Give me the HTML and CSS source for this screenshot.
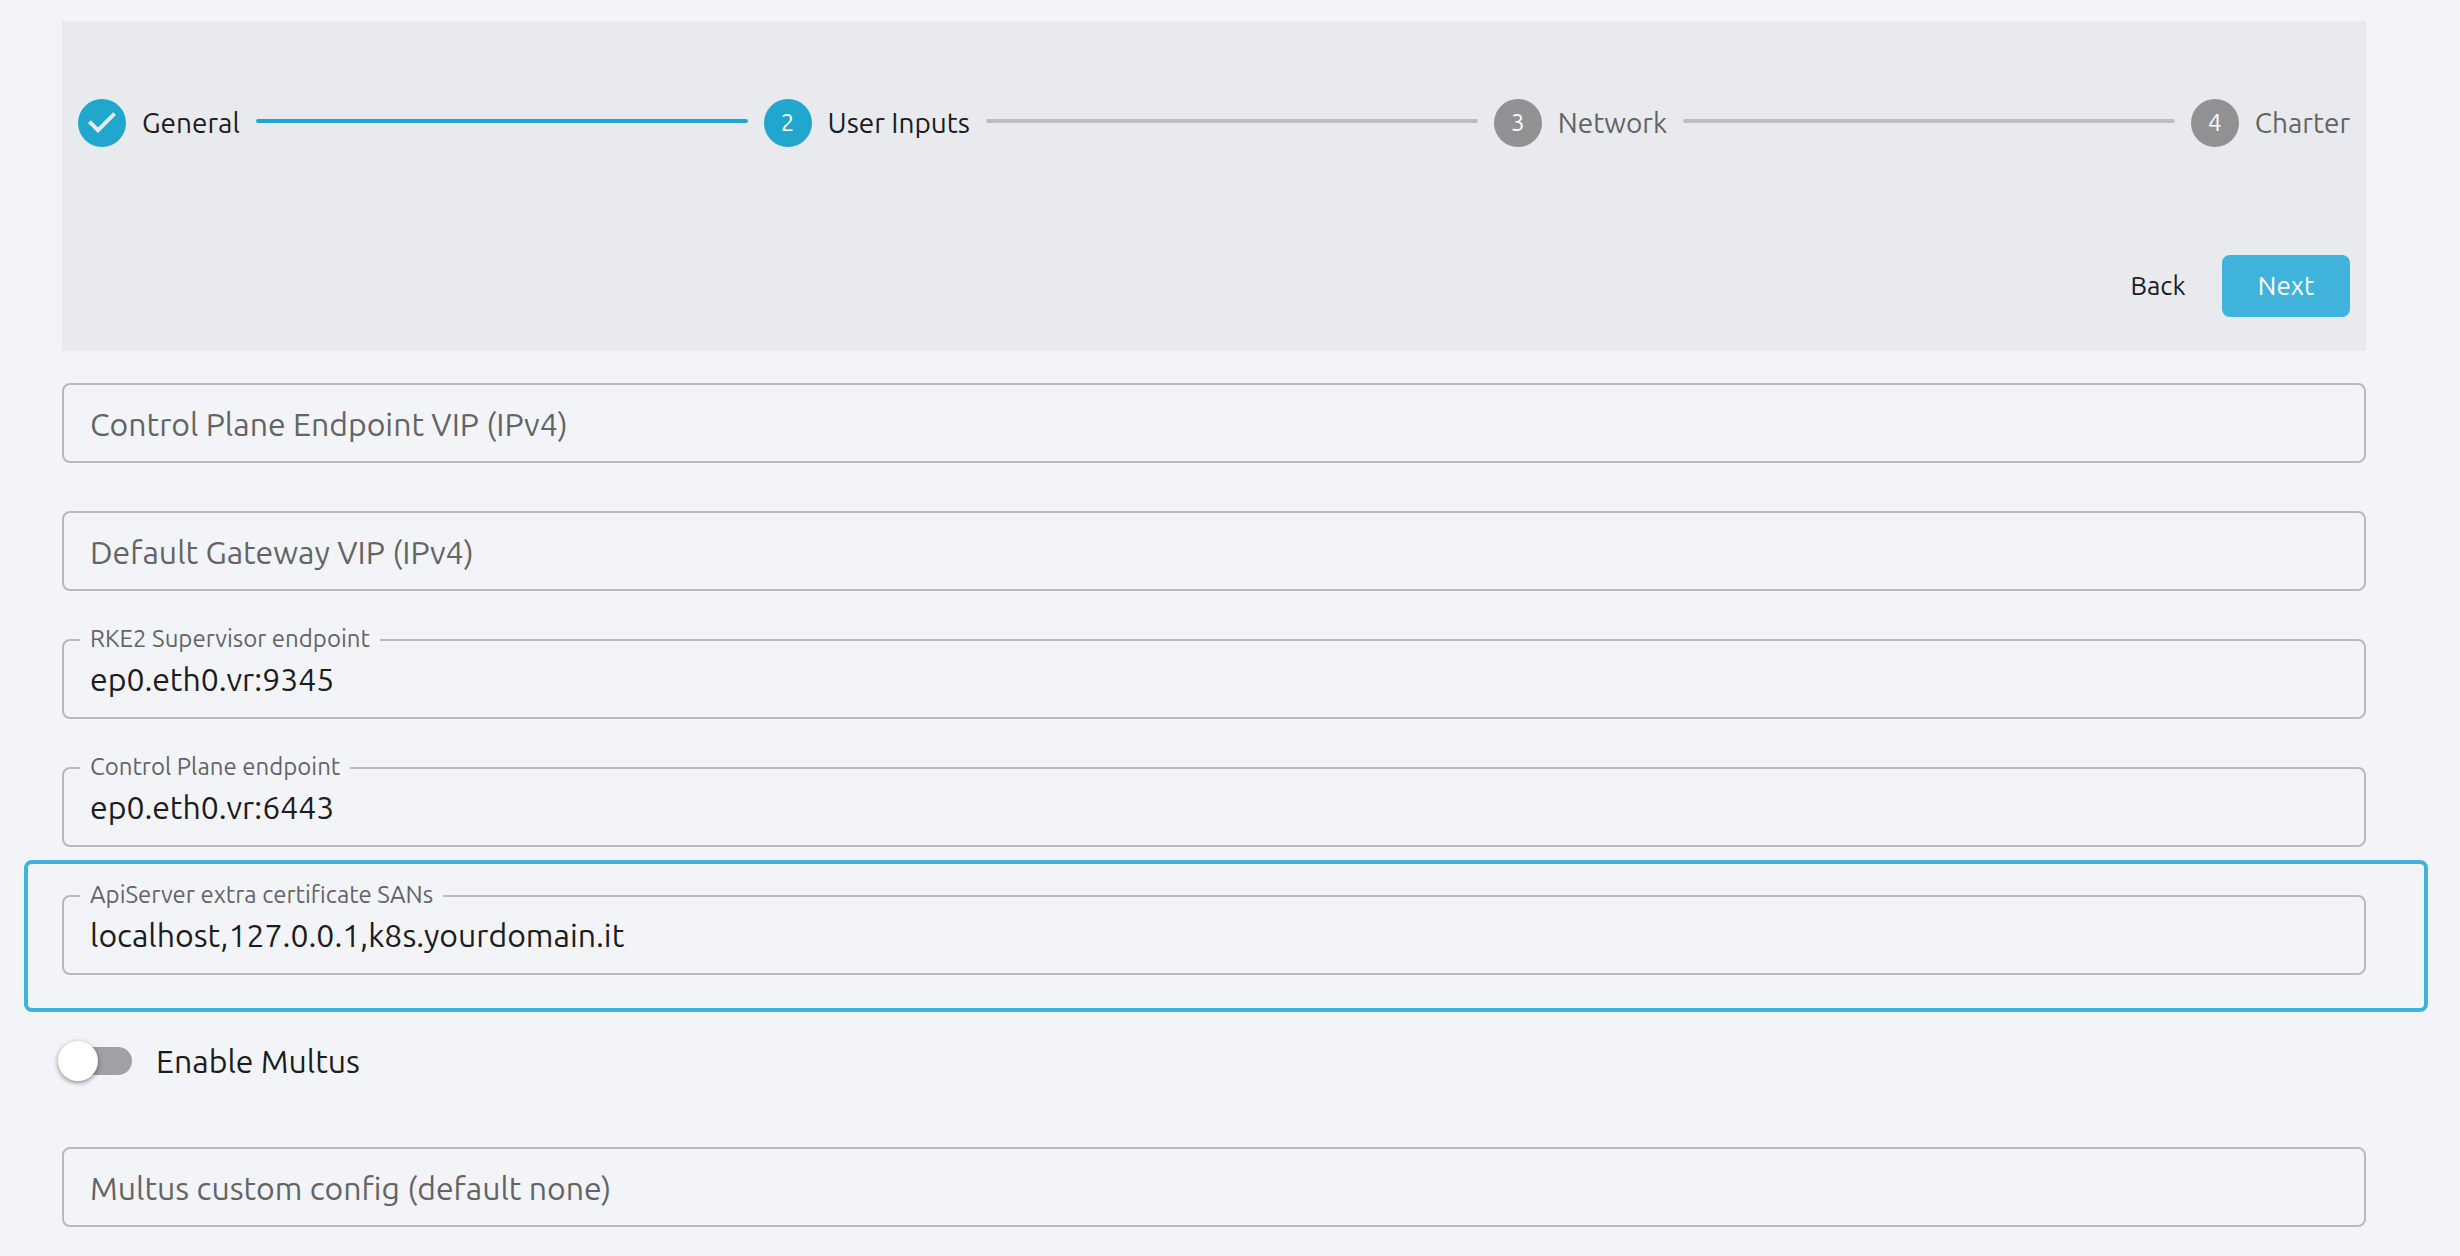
FILE: index.html
```html
<!DOCTYPE html>
<html lang="en">
<head>
<meta charset="utf-8">
<meta name="viewport" content="width=device-width, initial-scale=1">
<title>Cluster setup - User Inputs</title>
<link rel="stylesheet" href="styles.css">
</head>
<body>
<main class="page">
  <header class="wizard">
    <ol class="stepper">
      <li class="step step-done">
        <svg class="step-icon" viewBox="0 0 24 24" aria-hidden="true"><path d="M12 0a12 12 0 1 0 0 24 12 12 0 0 0 0-24zm-2 17l-5-5 1.4-1.4 3.6 3.6 7.6-7.6L19 8l-9 9z"/></svg>
        <span class="step-label">General</span>
      </li>
      <li class="connector connector-done" aria-hidden="true"></li>
      <li class="step step-active" aria-current="step">
        <span class="step-number">2</span>
        <span class="step-label">User Inputs</span>
      </li>
      <li class="connector" aria-hidden="true"></li>
      <li class="step">
        <span class="step-number">3</span>
        <span class="step-label">Network</span>
      </li>
      <li class="connector" aria-hidden="true"></li>
      <li class="step">
        <span class="step-number">4</span>
        <span class="step-label">Charter</span>
      </li>
    </ol>
    <div class="actions">
      <button type="button" class="button">Back</button>
      <button type="button" class="button button-primary">Next</button>
    </div>
  </header>

  <form class="form">
    <div class="field">
      <input class="field-input" id="cp-vip" type="text">
      <label class="field-label" for="cp-vip">Control Plane Endpoint VIP (IPv4)</label>
    </div>
    <div class="field">
      <input class="field-input" id="gw-vip" type="text">
      <label class="field-label" for="gw-vip">Default Gateway VIP (IPv4)</label>
    </div>
    <div class="field field-filled">
      <input class="field-input" id="rke2" type="text" value="ep0.eth0.vr:9345">
      <label class="field-label" for="rke2">RKE2 Supervisor endpoint</label>
    </div>
    <div class="field field-filled">
      <input class="field-input" id="cp-endpoint" type="text" value="ep0.eth0.vr:6443">
      <label class="field-label" for="cp-endpoint">Control Plane endpoint</label>
    </div>
    <div class="highlight">
      <div class="field field-filled">
        <input class="field-input" id="sans" type="text" value="localhost,127.0.0.1,k8s.yourdomain.it">
        <label class="field-label" for="sans">ApiServer extra certificate SANs</label>
      </div>
    </div>
    <label class="toggle">
      <input class="switch" type="checkbox" role="switch">
      <span>Enable Multus</span>
    </label>
    <div class="field">
      <input class="field-input" id="multus-config" type="text">
      <label class="field-label" for="multus-config">Multus custom config (default none)</label>
    </div>
  </form>
</main>
</body>
</html>
```

FILE: styles.css
```css
:root {
  --page: #f3f4f8;
  --panel: #e9eaee;
  --accent: #21a7cd;
  --accent-light: #40b3dc;
  --text: #1c1c1e;
  --muted: #636466;
  --outline: #b8babf;
}

* {
  box-sizing: border-box;
}

body {
  margin: 0;
  background: var(--page);
  color: var(--text);
  font-family: Ubuntu, "Noto Sans", "Open Sans", sans-serif;
  font-size: 32px;
  line-height: 40px;
}

.page {
  padding: 21px 94px 28px 62px;
}

/* Stepper panel */
.wizard {
  padding: 78px 16px 34px;
  background: var(--panel);
}

.stepper {
  display: flex;
  align-items: center;
  gap: 16px;
  margin: 0 0 108px;
  padding: 0;
  list-style: none;
}

.step {
  display: flex;
  align-items: center;
  gap: 16px;
  color: var(--muted);
  font-size: 28px;
}

.step-done,
.step-active {
  color: var(--text);
}

.step-icon,
.step-number {
  flex: none;
  width: 48px;
  height: 48px;
}

.step-icon {
  fill: var(--accent);
}

.step-number {
  border-radius: 50%;
  background: #909193;
  color: #fff;
  font-size: 24px;
  line-height: 48px;
  text-align: center;
}

.step-active .step-number {
  background: var(--accent);
}

.connector {
  flex: 1;
  height: 4px;
  margin-bottom: 4px;
  border-radius: 2px;
  background: #bdbdbf;
}

.connector-done {
  background: var(--accent);
}

.actions {
  display: flex;
  justify-content: flex-end;
}

.button {
  min-width: 128px;
  height: 62px;
  padding: 0 12px;
  border: 0;
  border-radius: 8px;
  background: transparent;
  color: var(--text);
  font: inherit;
  font-size: 26px;
}

.button-primary {
  background: var(--accent-light);
  color: #fff;
}

/* Outlined text fields */
.form {
  display: flex;
  flex-direction: column;
  gap: 48px;
  padding-top: 32px;
}

.field {
  position: relative;
}

.field-input {
  display: block;
  width: 100%;
  height: 80px;
  padding: 0 26px;
  border: 2px solid var(--outline);
  border-radius: 8px;
  background: transparent;
  color: var(--text);
  font: inherit;
}

.field-label {
  position: absolute;
  top: 50%;
  left: 18px;
  padding: 2px 10px 0;
  color: var(--muted);
  transform: translateY(-50%);
}

.field-filled .field-label {
  top: 0;
  padding: 0 10px;
  background: var(--page);
  font-size: 24px;
  line-height: 32px;
}

.highlight {
  margin: -35px -62px -37px -38px;
  padding: 31px 58px 33px 34px;
  border: 4px solid var(--accent-light);
  border-radius: 8px;
}

/* Switch */
.toggle {
  display: flex;
  align-items: center;
  align-self: flex-start;
  gap: 24px;
  margin: 18px 0 18px -4px;
}

.switch {
  display: flex;
  align-items: center;
  height: 40px;
  margin: 0;
  appearance: none;
}

.switch::before {
  content: "";
  z-index: 1;
  width: 40px;
  height: 40px;
  border-radius: 50%;
  background: #fff;
  box-shadow: 0 2px 4px rgba(0, 0, 0, 0.3), 0 1px 6px rgba(0, 0, 0, 0.15);
}

.switch::after {
  content: "";
  width: 64px;
  height: 28px;
  margin-left: -30px;
  border-radius: 14px;
  background: #a0a1a5;
}
```
